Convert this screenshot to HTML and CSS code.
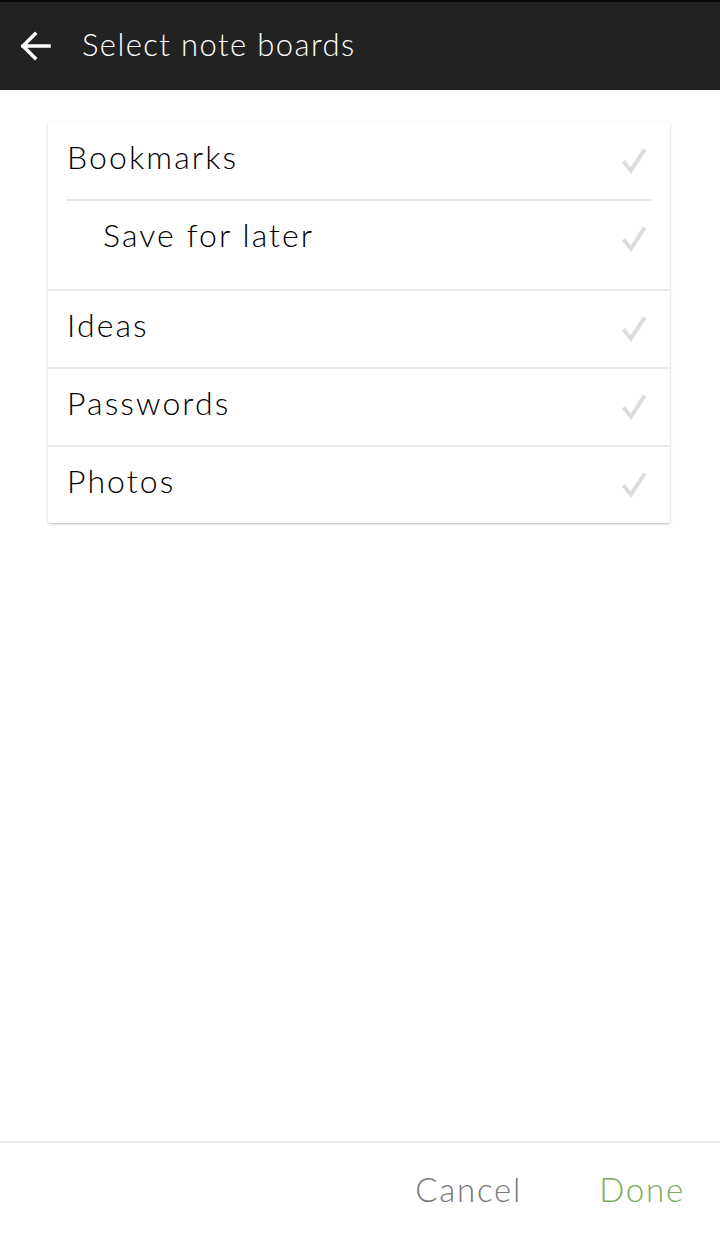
FILE: index.html
```html
<!DOCTYPE html>
<html>
<head>
<meta charset="utf-8">
<link rel="stylesheet" href="styles.css">
</head>
<body>
<div class="screen">
  <header class="appbar">
    <svg class="back" width="32" height="32" viewBox="0 0 32 32">
      <path d="M30 16H4M16 4L4 16L16 28" fill="none" stroke="#fff" stroke-width="3.5" stroke-linecap="square"/>
    </svg>
    <h1 class="title">Select note boards</h1>
  </header>
  <main class="content">
    <div class="card">
      <div class="group">
        <div class="row"><span class="label">Bookmarks</span><svg class="check" viewBox="0 0 26 28"><path d="M1 15.5 L4 13 L9.5 20.5 L22 1.5 L25.5 3.5 L10 27 Z" fill="#dcdcdc"/></svg></div>
        <div class="inset-divider"></div>
        <div class="row child"><span class="label">Save for later</span><svg class="check" viewBox="0 0 26 28"><path d="M1 15.5 L4 13 L9.5 20.5 L22 1.5 L25.5 3.5 L10 27 Z" fill="#dcdcdc"/></svg></div>
      </div>
      <div class="row bordered"><span class="label">Ideas</span><svg class="check" viewBox="0 0 26 28"><path d="M1 15.5 L4 13 L9.5 20.5 L22 1.5 L25.5 3.5 L10 27 Z" fill="#dcdcdc"/></svg></div>
      <div class="row bordered"><span class="label">Passwords</span><svg class="check" viewBox="0 0 26 28"><path d="M1 15.5 L4 13 L9.5 20.5 L22 1.5 L25.5 3.5 L10 27 Z" fill="#dcdcdc"/></svg></div>
      <div class="row bordered last"><span class="label">Photos</span><svg class="check" viewBox="0 0 26 28"><path d="M1 15.5 L4 13 L9.5 20.5 L22 1.5 L25.5 3.5 L10 27 Z" fill="#dcdcdc"/></svg></div>
    </div>
  </main>
  <footer class="actions">
    <button class="btn cancel">Cancel</button>
    <button class="btn done">Done</button>
  </footer>
</div>
</body>
</html>
```
FILE: styles.css
```css
* { box-sizing: border-box; }
html, body { margin: 0; padding: 0; }
body { background: #fff; font-family: "Lato", "Open Sans", sans-serif; color: #000; }
.screen { width: 720px; height: 1234px; display: flex; flex-direction: column; }
.appbar {
  height: 90px; background: #222222; border-top: 2px solid #0a0a0a;
  display: flex; align-items: center; padding-left: 19px; gap: 31px; flex-shrink: 0;
}
.back { display: block; margin-top: 0; }
.title { margin: 0; font-weight: 300; font-size: 31px; color: #fff; letter-spacing: 1.4px; position: relative; top: -2px; }
.content { flex: 1; padding: 32px 50px 0 48px; }
.card {
  background: #fff; border-radius: 2px;
  box-shadow: 0 1px 3px rgba(0,0,0,0.22), 0 1px 1px rgba(0,0,0,0.06);
}
.group { padding-bottom: 12px; }
.row { height: 76px; display: flex; align-items: center; justify-content: space-between; padding: 0 23px 0 19px; }
.row .label { font-size: 32px; font-weight: 300; color: #000; letter-spacing: 2.1px; margin-top: -9px; }
.row.child { padding-left: 55px; }
.row:first-child { height: 77px; }
.inset-divider { height: 2px; background: #e8e8e8; margin: 0 18px; }
.row.bordered { border-top: 2px solid #ececec; height: 78px; }
.check { width: 26px; height: 28px; display: block; }
.actions {
  height: 93px; border-top: 2px solid #ebebeb; flex-shrink: 0;
  display: flex; justify-content: flex-end; align-items: center; padding-right: 35px; gap: 77px;
}
.btn { background: none; border: 0; padding: 0; font-family: inherit; font-size: 33px; font-weight: 300; letter-spacing: 1.8px; }
.cancel { color: #777; }
.done { color: #7aab64; }
```
